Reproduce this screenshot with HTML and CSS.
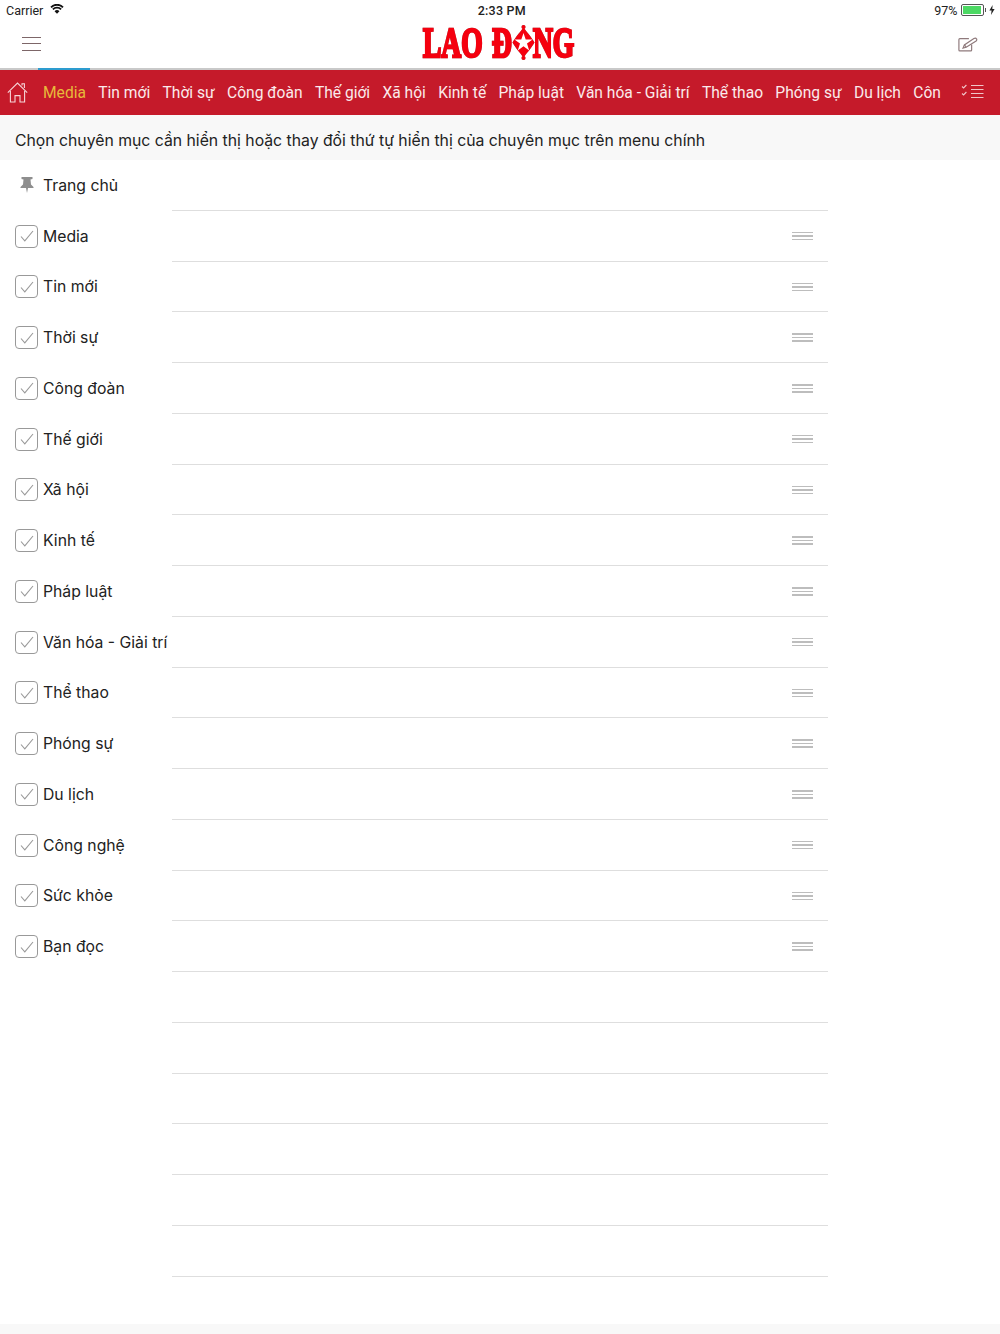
FILE: index.html
```html
<!DOCTYPE html>
<html lang="en">
<head>
  <meta charset="UTF-8">
  <meta name="viewport" content="width=device-width, initial-scale=1.0">
  <title>Lao Dong</title>
  <link rel="stylesheet" href="styles.css">
</head>
<body>

  <div class="status-bar">
    <div class="status-left">
      <span>Carrier</span>
      <svg class="wifi" width="14" height="10" viewBox="0 0 15 11">
        <path d="M7.5 10.8 L4.8 8 A3.8 3.8 0 0 1 10.2 8 Z" fill="#111"/>
        <path d="M3 6 A6.2 6.2 0 0 1 12 6" fill="none" stroke="#111" stroke-width="2"/>
        <path d="M0.9 3.6 A9.2 9.2 0 0 1 14.1 3.6" fill="none" stroke="#111" stroke-width="2"/>
      </svg>
    </div>
    <div class="status-time">2:33 PM</div>
    <div class="status-right">
      <span>97%</span>
      <div class="battery"><div class="battery-fill"></div></div>
      <div class="battery-tip"></div>
      <svg width="6" height="10" viewBox="0 0 6 10"><path d="M3.6 0 L0.4 5.6 H2.6 L2 10 L5.6 3.9 H3.3 Z" fill="#222"/></svg>
    </div>
  </div>

  <header class="top-bar">
    <div class="menu-icon"><span></span><span></span><span></span></div>
    <div class="logo">
      <span class="logo-lao">LAO</span>
      <span class="logo-d">Đ</span>
      <svg class="logo-star" width="23" height="37" viewBox="0 0 23 37">
        <circle cx="11.5" cy="3" r="2" fill="#f5000f"/>
        <circle cx="11.5" cy="34" r="2" fill="#f5000f"/>
        <path d="M11.5 3 C13.5 7 19 12 22.5 18.5 C19 25 13.5 30 11.5 34 C9.5 30 4 25 0.5 18.5 C4 12 9.5 7 11.5 3 Z" fill="#f5000f"/>
        <path d="M11.5 9 L13.7 15.6 H20.6 L15 19.6 L17.2 26.4 L11.5 22.2 L5.8 26.4 L8 19.6 L2.4 15.6 H9.3 Z" fill="#fff"/>
      </svg>
      <span class="logo-ng">NG</span>
    </div>
    <svg class="edit-icon" width="20" height="15" viewBox="0 0 22 16" fill="none" stroke="#8f7a7c" stroke-width="1.3">
      <path d="M12 1.5 H2 Q1 1.5 1 2.5 V14 Q1 15 2 15 H14 Q15 15 15 14 V8"/>
      <path d="M5.5 12 L7 8.5 L17.5 1.5 Q19.5 0.5 20.5 2 Q21 3.5 19.5 4.5 L9 11 Z"/>
      <path d="M7 8.5 L9 11"/>
    </svg>
  </header>

  <nav class="nav-bar">
    <div class="nav-accent"></div>
    <svg class="home-icon" width="21" height="21" viewBox="0 0 21 21" fill="none" stroke="#f6d5d7" stroke-width="1.1">
      <path d="M0.8 10.6 L10.5 1 L20.2 10.6"/>
      <path d="M15 3.4 V1.8 H17.4 V6"/>
      <path d="M3.4 9 V20 H8 V13.6 H13 V20 H17.6 V9"/>
    </svg>
    <div class="nav-items">
      <span class="nav-item active">Media</span>
      <span class="nav-item">Tin mới</span>
      <span class="nav-item">Thời sự</span>
      <span class="nav-item">Công đoàn</span>
      <span class="nav-item">Thế giới</span>
      <span class="nav-item">Xã hội</span>
      <span class="nav-item">Kinh tế</span>
      <span class="nav-item">Pháp luật</span>
      <span class="nav-item">Văn hóa - Giải trí</span>
      <span class="nav-item">Thể thao</span>
      <span class="nav-item">Phóng sự</span>
      <span class="nav-item">Du lịch</span>
      <span class="nav-item">Côn</span>
    </div>
    <svg class="list-icon" width="23" height="15" viewBox="0 0 23 15" fill="none" stroke="#f0c4c8" stroke-width="1.1">
      <path d="M1 2.5 L2.6 4 L5.4 1 M1 9.5 L2.6 11 L5.4 8"/>
      <path d="M10 1.5 H22.5 M10 5.5 H22.5 M10 9.5 H22.5 M10 13.5 H22.5"/>
    </svg>
  </nav>

  <div class="hint">Chọn chuyên mục cần hiển thị hoặc thay đổi thứ tự hiển thị của chuyên mục trên menu chính</div>

  <div class="list">
    <div class="row">
      <div class="row-label">
        <svg class="pin" width="14" height="16" viewBox="0 0 14 16"><path d="M1.5 0 H12.5 V2 L10.5 2.6 L11 7.5 L13.5 10 V11 H8 L7 16 L6 11 H0.5 V10 L3 7.5 L3.5 2.6 L1.5 2 Z" fill="#8e8e8e"/></svg>
        <span>Trang chủ</span>
      </div>
      <div class="row-line"></div>
    </div>
    <div id="rows"></div>
    <div class="row"><div class="row-line"></div></div>
    <div class="row"><div class="row-line"></div></div>
    <div class="row"><div class="row-line"></div></div>
    <div class="row"><div class="row-line"></div></div>
    <div class="row"><div class="row-line"></div></div>
    <div class="row"><div class="row-line"></div></div>
  </div>

  <div class="bottom-strip"></div>

  <script>
    const names = ['Media', 'Tin mới', 'Thời sự', 'Công đoàn', 'Thế giới', 'Xã hội', 'Kinh tế', 'Pháp luật',
      'Văn hóa - Giải trí', 'Thể thao', 'Phóng sự', 'Du lịch', 'Công nghệ', 'Sức khỏe', 'Bạn đọc'];
    const rows = document.getElementById('rows');

    names.forEach((name) => {
      rows.innerHTML += `
        <div class="row">
          <div class="row-label">
            <div class="checkbox">
              <svg width="14" height="12" viewBox="0 0 14 12"><path d="M1 6.5 L4.8 10.8 L13 1" fill="none" stroke="#999" stroke-width="1.1"/></svg>
            </div>
            <span>${name}</span>
          </div>
          <div class="row-line"></div>
          <div class="handle"><span></span><span></span><span></span></div>
        </div>`;
    });
  </script>

</body>
</html>
```

FILE: styles.css
```css
html, body {
  margin: 0;
  padding: 0;
}
body {
  width: 1000px;
  height: 1334px;
  overflow: hidden;
  background: #fff;
  font-family: Inter, Roboto, sans-serif;
  color: #222;
  display: flex;
  flex-direction: column;
}

/* status bar */
.status-bar {
  height: 20px;
  display: flex;
  align-items: center;
  justify-content: space-between;
  padding: 0 5px 0 6px;
  font-family: Roboto, sans-serif;
  font-size: 12.5px;
  color: #222;
}
.status-left, .status-right {
  display: flex;
  align-items: center;
}
.wifi {
  margin-left: 7px;
  margin-top: -2px;
}
.status-time {
  flex: 1;
  text-align: center;
  font-weight: 500;
  letter-spacing: 0.2px;
  padding-left: 5px;
}
.battery {
  width: 19px;
  height: 8px;
  border: 1px solid #555;
  border-radius: 2px;
  padding: 1px;
  margin-left: 3px;
}
.battery-fill {
  width: 97%;
  height: 100%;
  background: #4cd964;
}
.battery-tip {
  width: 1.5px;
  height: 4px;
  background: #555;
  margin: 0 3px 0 1px;
}

/* top bar */
.top-bar {
  height: 48px;
  display: flex;
  align-items: center;
  justify-content: space-between;
  padding: 0 22px 0 22px;
  position: relative;
}
.menu-icon {
  display: flex;
  flex-direction: column;
  gap: 5.5px;
  width: 19px;
  margin-top: -1px;
}
.menu-icon span {
  height: 1px;
  background: #7d6668;
}
.logo {
  position: absolute;
  left: 422px;
  top: 3px;
  width: 155px;
  height: 38px;
  font-family: "Liberation Serif", serif;
  font-weight: bold;
  font-size: 43px;
  line-height: 38px;
  color: #f5000f;
  -webkit-text-stroke: 2.6px #f5000f;
  filter: drop-shadow(0 0 0.6px #888);
}
.logo-lao, .logo-d, .logo-ng {
  position: absolute;
  top: 1px;
  transform-origin: left top;
  transform: scaleX(0.64);
}
.logo-lao {
  left: 1px;
}
.logo-d {
  left: 70px;
}
.logo-ng {
  left: 111px;
}
.logo-star {
  position: absolute;
  left: 90px;
  top: 1px;
}
.edit-icon {
  display: block;
}

/* red nav */
.nav-bar {
  height: 45px;
  background: #c51a2a;
  border-top: 2px solid #c9c9c9;
  display: flex;
  align-items: center;
  position: relative;
}
.nav-accent {
  position: absolute;
  left: 38px;
  top: -2px;
  width: 52px;
  height: 2px;
  background: #2d9ccf;
}
.home-icon {
  flex: none;
  margin-left: 7px;
}
.nav-items {
  margin-left: 15px;
  flex: none;
  width: 898px;
  display: flex;
  gap: 12.3px;
  white-space: nowrap;
  font-family: Roboto, sans-serif;
  font-size: 15.6px;
  color: #fbeaeb;
}
.nav-item.active {
  color: #e8b93a;
}
.list-icon {
  flex: none;
  margin-left: 20px;
  margin-top: -2px;
}

/* hint */
.hint {
  height: 45px;
  line-height: 51px;
  background: #f8f8f8;
  padding-left: 15px;
  font-size: 15.77px;
  color: #222;
}

/* rows */
.list {
  flex: 1;
}
.row {
  height: 50.76px;
  position: relative;
  display: flex;
  align-items: center;
}
.row-label {
  display: flex;
  align-items: center;
  padding-left: 15px;
  font-size: 15.75px;
  white-space: nowrap;
}
.row-label span {
  margin-left: 5px;
}
.pin {
  width: 14px;
  margin: 0 4px 0 5px;
}
.checkbox {
  width: 21px;
  height: 21px;
  border: 1px solid #999;
  border-radius: 4px;
  display: flex;
  align-items: center;
  justify-content: center;
}
.row-line {
  position: absolute;
  left: 172px;
  width: 656px;
  bottom: 0;
  height: 1px;
  background: #dedede;
}
.handle {
  position: absolute;
  left: 792px;
  top: 21px;
  width: 21px;
  display: flex;
  flex-direction: column;
  gap: 2px;
}
.handle span {
  height: 1.5px;
  background: #bdbdbd;
}
.bottom-strip {
  height: 10px;
  background: #f8f8f8;
}
```
